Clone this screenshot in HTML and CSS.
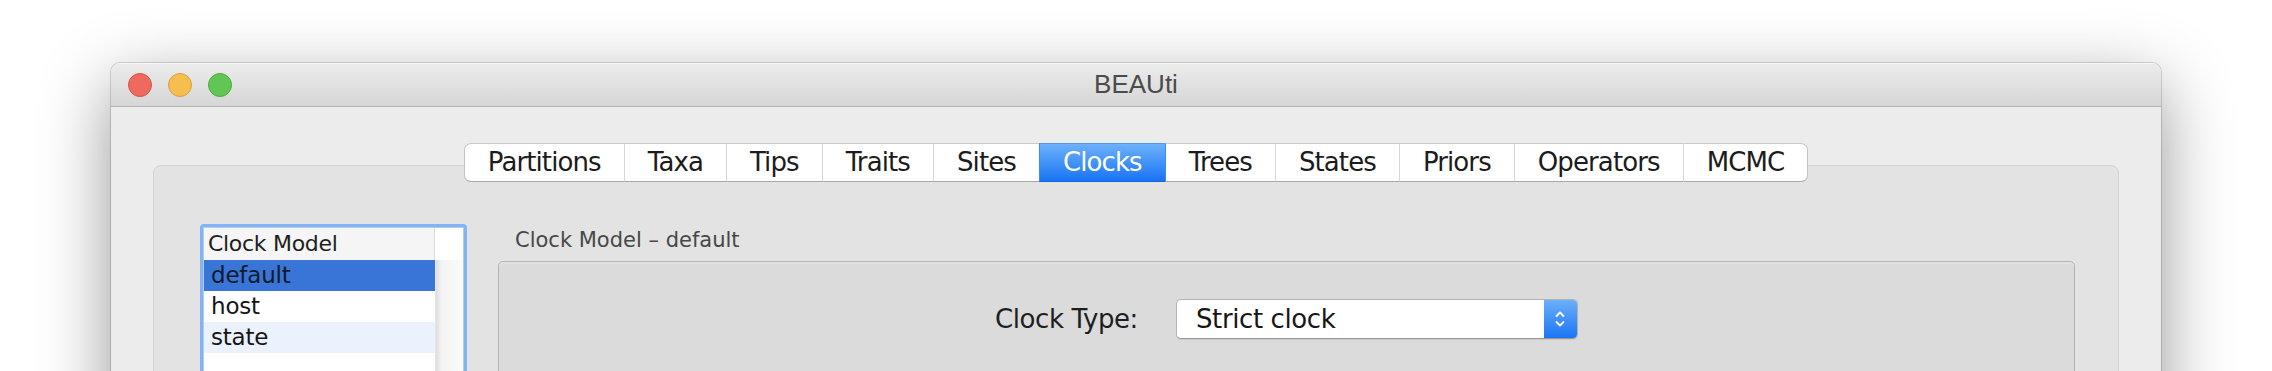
FILE: index.html
```html
<!DOCTYPE html>
<html>
<head>
<meta charset="utf-8">
<title>BEAUti</title>
<link rel="stylesheet" href="styles.css">
</head>
<body>
<div class="window">
  <div class="titlebar">
    <div class="lights">
      <span class="light red"></span>
      <span class="light yellow"></span>
      <span class="light green"></span>
    </div>
    <div class="title">BEAUti</div>
    <div class="spacer"></div>
  </div>
  <div class="content">
    <div class="tabpane">
      <div class="tabs">
        <div class="tab first">Partitions</div>
        <div class="tab">Taxa</div>
        <div class="tab">Tips</div>
        <div class="tab">Traits</div>
        <div class="tab">Sites</div>
        <div class="tab selected">Clocks</div>
        <div class="tab">Trees</div>
        <div class="tab">States</div>
        <div class="tab">Priors</div>
        <div class="tab">Operators</div>
        <div class="tab last">MCMC</div>
      </div>
      <div class="panel">
        <div class="listbox">
          <div class="list-inner">
            <div class="list-main">
              <div class="list-header">Clock Model</div>
              <div class="row sel">default</div>
              <div class="row">host</div>
              <div class="row alt">state</div>
            </div>
            <div class="scroll">
              <div class="corner"></div>
              <div class="track"></div>
            </div>
          </div>
        </div>
        <div class="detail">
          <div class="detail-label">Clock Model – default</div>
          <div class="detail-box">
            <div class="field-row">
              <span class="field-label">Clock Type:</span>
              <div class="combo">
                <span class="combo-text">Strict clock</span>
                <span class="combo-btn">
                  <svg width="12" height="22" viewBox="0 0 12 22"><path d="M2.5 8 L6 4.5 L9.5 8 M2.5 14 L6 17.5 L9.5 14" fill="none" stroke="#fff" stroke-width="1.8" stroke-linecap="round" stroke-linejoin="round"/></svg>
                </span>
              </div>
            </div>
          </div>
        </div>
      </div>
    </div>
  </div>
</div>
</body>
</html>
```
FILE: styles.css
```css
html, body {
  margin: 0;
  padding: 0;
  background: #ffffff;
  height: 371px;
  overflow: hidden;
}

.window {
  margin: 63px 0 0 111px;
  width: 2050px;
  height: 420px;
  background: #ececec;
  border-radius: 9px 9px 0 0;
  box-shadow: 0 22px 70px rgba(0,0,0,0.42), 0 0 0 1px rgba(0,0,0,0.14);
  overflow: hidden;
}

.titlebar {
  height: 43px;
  border-bottom: 1px solid #b3b3b3;
  background: linear-gradient(#ececec, #d6d6d6);
  box-shadow: inset 0 1px 0 #f7f7f7;
  display: grid;
  grid-template-columns: 1fr auto 1fr;
  align-items: center;
}

.lights {
  display: flex;
  gap: 16px;
  padding-left: 17px;
}

.light {
  width: 24px;
  height: 24px;
  border-radius: 50%;
  box-sizing: border-box;
}
.red { background: #ee6a5f; border: 1px solid #d8534a; }
.yellow { background: #f6be4f; border: 1px solid #d9a23d; }
.green { background: #62c655; border: 1px solid #4eaa3f; }

.title {
  font-family: "Liberation Sans", Arial, sans-serif;
  font-size: 26px;
  color: #4b4b4b;
}

.content {
  padding: 36px 42px 0 42px;
}

.tabs {
  display: flex;
  justify-content: center;
  position: relative;
  z-index: 1;
}

.tab {
  height: 39px;
  box-sizing: border-box;
  padding: 0 23px;
  background: #ffffff;
  border-top: 1px solid #c9c9c9;
  border-bottom: 1px solid #a8a8a8;
  border-left: 1px solid #d6d6d6;
  font-family: "DejaVu Sans", sans-serif;
  font-size: 26px;
  letter-spacing: -0.9px;
  line-height: 37px;
  color: #1c1c1c;
}
.tab.first {
  border-left: 1px solid #c2c2c2;
  border-radius: 7px 0 0 7px;
}
.tab.last {
  border-right: 1px solid #c2c2c2;
  border-radius: 0 7px 7px 0;
}
.tab.selected {
  background: linear-gradient(#6db1fb, #1874f4);
  color: #ffffff;
  border-top-color: #4d98f8;
  border-bottom-color: #1565e0;
  border-left-color: #3a8af7;
}
.tab.selected + .tab {
  border-left-color: #3a8af7;
}

.panel {
  margin-top: -17px;
  height: 400px;
  background: #e3e3e3;
  border: 1px solid #d2d2d2;
  border-radius: 8px;
  padding: 58px 43px 0 46px;
  display: flex;
  align-items: flex-start;
}

.listbox {
  width: 267px;
  box-sizing: border-box;
  border: 3px solid #84b3f3;
  border-radius: 4px;
  background: #ffffff;
}

.list-inner {
  border: 1px solid #b2cbf0;
  display: flex;
  height: 300px;
}

.list-main {
  width: 231px;
  font-family: "DejaVu Sans", sans-serif;
}

.list-header {
  height: 32px;
  box-sizing: border-box;
  background: #f5f5f5;
  border-right: 1px solid #dcdcdc;
  padding-left: 4px;
  font-size: 22px;
  letter-spacing: -0.3px;
  line-height: 32px;
  color: #1e1e1e;
}

.row {
  height: 31px;
  padding-left: 7px;
  font-size: 23px;
  letter-spacing: -0.2px;
  line-height: 31px;
  color: #151515;
}
.row.sel { background: #3875d7; color: #0f1a2e; }
.row.alt { background: #ecf2fd; }

.scroll {
  flex: 1;
  display: flex;
  flex-direction: column;
}
.corner {
  height: 32px;
  background: #ffffff;
}
.track {
  flex: 1;
  background: linear-gradient(to right, #dedede, #f3f3f3 20%, #f8f8f8 70%, #fbfbfb);
  border-left: 1px solid #e6e6e6;
}

.detail {
  flex: 1;
  margin-left: 31px;
}

.detail-label {
  padding: 2px 0 0 17px;
  height: 28px;
  font-family: "DejaVu Sans", sans-serif;
  font-size: 21px;
  line-height: 28px;
  color: #474747;
}

.detail-box {
  margin-top: 7px;
  height: 300px;
  background: #dbdbdb;
  border: 1px solid #b4b4b4;
  border-radius: 5px;
  padding-top: 37px;
  box-shadow: inset 0 2px 0 #e2e2e2;
}

.field-row {
  display: flex;
  justify-content: center;
  align-items: center;
  gap: 38px;
}

.field-label {
  font-family: "DejaVu Sans", sans-serif;
  font-size: 26px;
  letter-spacing: -0.4px;
  color: #1e1e1e;
}

.combo {
  width: 402px;
  height: 40px;
  box-sizing: border-box;
  border: 1px solid #b3b3b3;
  border-bottom-color: #979797;
  border-radius: 5px;
  background: #ffffff;
  display: flex;
  align-items: stretch;
  overflow: hidden;
  box-shadow: 0 1px 1px rgba(0,0,0,0.08);
}

.combo-text {
  flex: 1;
  padding-left: 19px;
  font-family: "DejaVu Sans", sans-serif;
  font-size: 26px;
  letter-spacing: -0.4px;
  line-height: 38px;
  color: #161616;
}

.combo-btn {
  width: 33px;
  background: linear-gradient(#6cb0fb, #1b74f3);
  display: flex;
  align-items: center;
  justify-content: center;
}
```
